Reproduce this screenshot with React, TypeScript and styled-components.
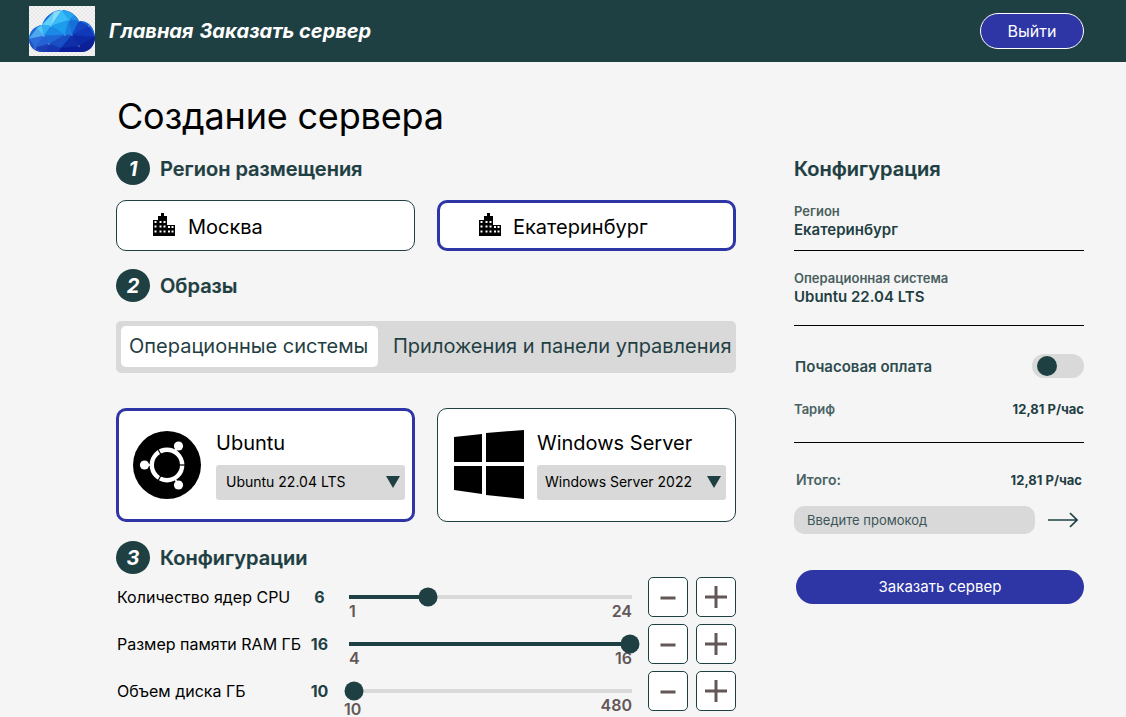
import React from "react";
import styled, { createGlobalStyle } from "styled-components";

const Global = createGlobalStyle`
  html, body { margin: 0; padding: 0; height: 717px; overflow: hidden; background: #f5f5f5; }
  body { font-family: Inter, "Liberation Sans", sans-serif; color: #000; }
  * { box-sizing: border-box; }
`;

const DARK = "#1f4043";
const BLUE = "#2e35a5";

const Header = styled.header`
  height: 62px; background: ${DARK}; display: flex; align-items: center;
  padding: 0 42px 0 29px;
`;
const LogoBox = styled.div`width: 66px; height: 50px; background: #f2f2f2; flex: none; display: flex; margin-top: -1px;`;
const Nav = styled.nav`display: flex; gap: 6px; margin-left: 14px; flex: 1; margin-top: -1px;`;
const NavLink = styled.a`
  font: italic 700 20px/24px Inter, sans-serif; color: #fff;
`;
const ExitButton = styled.button`
  width: 104px; height: 36px; border-radius: 18px; border: 1px solid #fff; background: ${BLUE};
  color: #fff; font: 400 16px/20px Inter, sans-serif; padding: 0;
`;

const Main = styled.main`
  display: grid; grid-template-columns: 620px 290px; column-gap: 58px; padding-left: 116px;
`;
const Left = styled.section`display: flex; flex-direction: column; min-width: 0;`;
const Right = styled.aside`display: flex; flex-direction: column; padding-top: 95px;`;
const Title = styled.h1`
  margin: 32px 0 0 1px; font: 400 36px/44px Inter, sans-serif; color: #000; height: 44px; letter-spacing: -0.19px;
`;
const StepRow = styled.div<{ $top: number }>`
  display: flex; align-items: center; gap: 10px; height: 33px; margin-top: ${(p) => p.$top}px;
`;
const StepBadge = styled.span`
  width: 34px; height: 33px; border-radius: 50%; background: ${DARK}; color: #fff; flex: none;
  display: flex; align-items: center; justify-content: center;
  font: italic 700 20px/24px Inter, sans-serif;
`;
const StepTitle = styled.h2`
  margin: 0; font: 600 20px/24px Inter, sans-serif; color: ${DARK}; -webkit-text-stroke: 0.2px ${DARK};
`;
const TwoCols = styled.div<{ $top: number }>`
  display: grid; grid-template-columns: 299px 299px; column-gap: 22px; margin-top: ${(p) => p.$top}px;
`;
const RegionCard = styled.div<{ $on?: boolean }>`
  height: 51px; background: #fff; border-radius: 10px;
  border: ${(p) => (p.$on ? `3px solid ${BLUE}` : `1px solid ${DARK}`)};
  display: flex; align-items: center; gap: ${(p) => (p.$on ? 12 : 13)}px;
  padding: 2px 0 0 ${(p) => (p.$on ? 39 : 36)}px;
  font: 400 20px/24px Inter, sans-serif;
  & svg { margin-top: -4px; flex: none; }
`;
const Tabs = styled.div`
  margin-top: 19px; height: 52px; background: #d9d9d9; border-radius: 5px; padding: 5px 4px 6px 5px;
  display: flex; align-items: stretch;
`;
const Tab = styled.div<{ $on?: boolean }>`
  font: 400 20px/41px Inter, sans-serif; white-space: nowrap; color: ${DARK};
  ${(p) => (p.$on ? `background:#fff; border-radius:5px; width:257px; padding-left:8px; margin-right:15px;` : "")}
`;
const OsCard = styled.div<{ $on?: boolean }>`
  height: 114px; background: #fff; border-radius: 10px;
  border: ${(p) => (p.$on ? `3px solid ${BLUE}` : `1px solid ${DARK}`)};
  display: grid; grid-template-columns: 70px 189px; column-gap: ${(p) => (p.$on ? 14 : 13)}px; align-items: center;
  padding-left: ${(p) => (p.$on ? 13 : 16)}px;
`;
const OsBody = styled.div`display: flex; flex-direction: column;`;
const OsName = styled.div`font: 400 20px/24px Inter, sans-serif; margin: 0 0 10px 0; color: #000;`;
const SelectBox = styled.div<{ $pad: number }>`
  height: 35px; background: #d9d9d9; border-radius: 3px; display: flex; align-items: center;
  justify-content: space-between; padding: 0 5px 0 ${(p) => p.$pad}px;
  font: 400 14px/18px Inter, sans-serif; color: #000; white-space: nowrap;
  & svg { flex: none; }
`;
const Configs = styled.div`display: flex; flex-direction: column; gap: 7px; margin-top: 3px;`;
const ConfigRow = styled.div`
  display: grid; grid-template-columns: 186px 47px 283px 88px; align-items: start; height: 40px;
`;
const ConfigLabel = styled.div`font: 400 16px/20px Inter, sans-serif; margin-top: 10px; padding-left: 1px; white-space: nowrap;`;
const ConfigValue = styled.div`font: 700 16px/20px Inter, sans-serif; color: ${DARK}; margin-top: 10px; text-align: center; padding-right: 12px;`;
const Slider = styled.div`display: flex; flex-direction: column; padding-top: 18px;`;
const Track = styled.div`height: 4px; background: #d9d9d9; position: relative;`;
const Fill = styled.div`position: absolute; left: 0; top: 0; bottom: 0; background: ${DARK};`;
const Thumb = styled.div`
  position: absolute; top: 50%; width: 19px; height: 19px; border-radius: 50%; background: ${DARK};
  transform: translate(-50%, -50%);
`;
const Scale = styled.div`
  display: flex; justify-content: space-between; align-items: flex-start;
  font: 600 16px/16px Inter, sans-serif; color: #635757; margin-top: 4px;
`;
const MinTick = styled.span<{ $shift: number; $drop: number }>`
  margin-left: ${(p) => p.$shift}px; margin-top: ${(p) => p.$drop}px;
`;
const Steppers = styled.div`display: flex; gap: 8px; padding-left: 16px;`;
const StepBtn = styled.button`
  width: 40px; height: 40px; padding: 0; background: #fff; border: 1px solid ${DARK}; border-radius: 5px;
  display: flex; align-items: center; justify-content: center; flex: none;
`;
const SideTitle = styled.h3`margin: 0; font: 600 20px/24px Inter, sans-serif; color: ${DARK}; -webkit-text-stroke: 0.2px ${DARK};`;
const SideBlock = styled.div<{ $h: number; $top: number }>`
  height: ${(p) => p.$h}px; margin-top: ${(p) => p.$top}px; border-bottom: 1px solid #000;
  display: flex; flex-direction: column;
`;
const SideLabel = styled.div`font: 600 13px/16px Inter, sans-serif; color: #4a5f60; margin-top: -1px;`;
const SideValue = styled.div`font: 600 15px/18px Inter, sans-serif; color: ${DARK}; margin-top: 2px;`;
const ToggleRow = styled.div`display: flex; justify-content: space-between; align-items: center; margin-top: 28px; height: 24px; padding-left: 1px;`;
const ToggleLabel = styled.div`font: 600 15px/18px Inter, sans-serif; color: #2d4c4f; padding-top: 1px;`;
const Toggle = styled.div`width: 52px; height: 24px; background: #d9d9d9; border-radius: 12px; display: flex; align-items: center; padding-left: 5px;`;
const Knob = styled.div`width: 20px; height: 20px; border-radius: 50%; background: ${DARK};`;
const PriceRow = styled.div<{ $top: number; $inset?: number }>`
  display: flex; justify-content: space-between; align-items: center; height: 16px;
  margin-top: ${(p) => p.$top}px; padding: 0 ${(p) => p.$inset ?? 0}px;
`;
const PriceLabel = styled.div<{ $size: number }>`font: 600 ${(p) => p.$size}px/16px Inter, sans-serif; color: #4a6364;`;
const PriceValue = styled.div`font: 700 13px/16px Inter, sans-serif; color: ${DARK};`;
const Rule = styled.div`height: 1px; background: #000; margin-top: 25px;`;
const PromoRow = styled.div`display: flex; align-items: center; margin-top: 18px; gap: 13px;`;
const Promo = styled.div`
  width: 241px; height: 28px; border-radius: 10px; background: #d9d9d9; padding-left: 13px;
  font: 400 13px/28px Inter, sans-serif; color: #3c5557;
`;
const OrderBtn = styled.button`
  margin: 36px 0 0 2px; height: 34px; width: 288px; border: 0; border-radius: 17px; background: ${BLUE};
  color: #fff; font: 400 15px/18px Inter, sans-serif; padding: 0;
`;

const cloud = "M14 46C5 46 0 40 0 33 0 26 5 20 13 19 16 10 24 4 33 4 41 4 47 9 50 15 59 14 66 22 66 31 66 40 60 46 52 46Z";
const facets: [string, string][] = [
  ["0,33 8,22 15,30", "#4fa8ee"],
  ["8,22 13,19 15,30", "#55c8f8"],
  ["13,19 25,6 22,20", "#5fd0fb"],
  ["25,6 33,4 22,20", "#86def9"],
  ["33,4 40,14 22,20", "#39bdf8"],
  ["33,4 47,8 40,14", "#25a6ee"],
  ["47,8 50,15 40,14", "#1e8ee4"],
  ["13,19 22,20 15,30", "#2fb0f3"],
  ["22,20 40,14 36,29", "#1e9cec"],
  ["22,20 36,29 15,30", "#1a8ae6"],
  ["40,14 50,15 43,29", "#176fd8"],
  ["40,14 43,29 36,29", "#1a7fe0"],
  ["50,15 60,20 43,29", "#1446c4"],
  ["60,20 66,31 43,29", "#1138b8"],
  ["0,33 15,30 6,42", "#2a6ddb"],
  ["15,30 20,38 6,42", "#2563d4"],
  ["15,30 36,29 20,38", "#1f67d6"],
  ["36,29 43,29 32,42", "#1550c8"],
  ["20,38 36,29 32,42", "#1a4fc4"],
  ["0,33 6,42 14,46 0,46", "#2450c0"],
  ["6,42 20,38 18,46 14,46", "#1c3db4"],
  ["20,38 32,42 30,46 18,46", "#1536ae"],
  ["32,42 43,29 50,40", "#0f2ea8"],
  ["43,29 66,31 50,40", "#0d2aa6"],
  ["32,42 50,40 52,46 30,46", "#0a1f9c"],
  ["50,40 66,31 66,46 52,46", "#0c1f94"],
];
const sparks: [number, number][] = [[15, 30], [22, 20], [33, 4], [40, 14], [43, 29], [50, 15], [60, 20], [6, 42], [20, 38], [36, 29], [50, 40]];

const CloudLogo = () => (
  <svg width="66" height="50" viewBox="0 0 66 50">
    <defs>
      <pattern id="chk" width="4" height="4" patternUnits="userSpaceOnUse">
        <rect width="4" height="4" fill="#f4f4f4" />
        <rect width="2" height="2" fill="#e9e9e9" />
        <rect x="2" y="2" width="2" height="2" fill="#e9e9e9" />
      </pattern>
      <clipPath id="cc"><path d={cloud} /></clipPath>
    </defs>
    <rect width="66" height="50" fill="url(#chk)" />
    <path d={cloud} fill="#1a6ad8" />
    <g clipPath="url(#cc)">
      {facets.map(([p, f]) => <polygon key={p} points={p} fill={f} stroke={f} strokeWidth="0.4" />)}
      {sparks.map(([x, y]) => <circle key={x + "-" + y} cx={x} cy={y} r="0.6" fill="#fff" opacity="0.85" />)}
    </g>
  </svg>
);

const CityIcon = () => (
  <svg width="22" height="23" viewBox="0 0 22 23">
    <path
      fillRule="evenodd"
      d="M0 7H5V3H8V0H11V3H14V12H22V23H0ZM1.5 8V10H3.5V8ZM6.5 8V10H8.5V8ZM10.5 8V10H12.5V8ZM1.5 12.5V14.5H3.5V12.5ZM6.5 12.5V14.5H8.5V12.5ZM10.5 12.5V14.5H12.5V12.5ZM15 13V15H17V13ZM18.5 13V15H20.5V13ZM1.5 17.5V19.5H3.5V17.5ZM6.5 17.5V19.5H8.5V17.5ZM10.5 17.5V19.5H12.5V17.5ZM15 17.5V19.5H17V17.5ZM18.5 17.5V19.5H20.5V17.5Z"
      fill="#000"
    />
  </svg>
);

const UbuntuIcon = () => (
  <svg width="70" height="70" viewBox="0 0 70 70">
    <circle cx="35" cy="35" r="34" fill="#000" />
    <circle cx="35" cy="35" r="15.2" fill="none" stroke="#fff" strokeWidth="4.4" />
    <g stroke="#000" strokeWidth="1.2">
      <line x1="45" y1="35" x2="54" y2="35" />
      <line x1="30" y1="26.3" x2="25.5" y2="18.5" />
      <line x1="30" y1="43.7" x2="25.5" y2="51.5" />
    </g>
    <g stroke="#fff" strokeWidth="1.6">
      <line x1="42.5" y1="22" x2="46" y2="16" />
      <line x1="42.5" y1="48" x2="46" y2="54" />
      <line x1="20" y1="35" x2="13" y2="35" />
    </g>
    <circle cx="46.5" cy="16" r="4.6" fill="#fff" />
    <circle cx="46.5" cy="55" r="4.6" fill="#fff" />
    <circle cx="12.5" cy="35" r="4.6" fill="#fff" />
  </svg>
);

const WindowsIcon = () => (
  <svg width="70" height="70" viewBox="0 0 70 70">
    <polygon points="0,7 28,4 28,32 0,32" fill="#000" />
    <polygon points="32,3 70,0 70,32 32,32" fill="#000" />
    <polygon points="0,36 28,36 28,64 0,60" fill="#000" />
    <polygon points="32,36 70,36 70,69 32,65" fill="#000" />
  </svg>
);

const Caret = () => (
  <svg width="14" height="12" viewBox="0 0 14 12"><polygon points="0,0 14,0 7,12" fill={DARK} /></svg>
);
const Minus = () => (
  <svg width="18" height="18" viewBox="0 0 18 18"><rect x="1.5" y="8.5" width="15" height="3" fill="#635757" /></svg>
);
const Plus = () => (
  <svg width="24" height="24" viewBox="0 0 24 24"><path d="M1 12H23M12 1V23" stroke="#635757" strokeWidth="3" /></svg>
);
const ArrowRight = () => (
  <svg width="30" height="16" viewBox="0 0 30 16" fill="none" stroke={DARK} strokeWidth="1.7">
    <path d="M0 8H29M22 1L29 8L22 15" />
  </svg>
);

const configs = [
  { label: "Количество ядер CPU", value: "6", min: "1", max: "24", pct: 28, shift: 0, drop: 0 },
  { label: "Размер памяти RAM ГБ", value: "16", min: "4", max: "16", pct: 99.3, shift: 0, drop: 0 },
  { label: "Объем диска ГБ", value: "10", min: "10", max: "480", pct: 1.8, shift: -5, drop: 4 },
];

export default function App() {
  return (
    <>
      <Global />
      <Header>
        <LogoBox><CloudLogo /></LogoBox>
        <Nav>
          <NavLink>Главная</NavLink>
          <NavLink>Заказать сервер</NavLink>
        </Nav>
        <ExitButton>Выйти</ExitButton>
      </Header>
      <Main>
        <Left>
          <Title>Создание сервера</Title>
          <StepRow $top={14}><StepBadge>1</StepBadge><StepTitle>Регион размещения</StepTitle></StepRow>
          <TwoCols $top={15}>
            <RegionCard><CityIcon />Москва</RegionCard>
            <RegionCard $on><CityIcon />Екатеринбург</RegionCard>
          </TwoCols>
          <StepRow $top={18}><StepBadge>2</StepBadge><StepTitle>Образы</StepTitle></StepRow>
          <Tabs>
            <Tab $on>Операционные системы</Tab>
            <Tab>Приложения и панели управления</Tab>
          </Tabs>
          <TwoCols $top={35}>
            <OsCard $on>
              <UbuntuIcon />
              <OsBody>
                <OsName>Ubuntu</OsName>
                <SelectBox $pad={10}>Ubuntu 22.04 LTS<Caret /></SelectBox>
              </OsBody>
            </OsCard>
            <OsCard>
              <WindowsIcon />
              <OsBody>
                <OsName>Windows Server</OsName>
                <SelectBox $pad={8}>Windows Server 2022<Caret /></SelectBox>
              </OsBody>
            </OsCard>
          </TwoCols>
          <StepRow $top={19}><StepBadge>3</StepBadge><StepTitle>Конфигурации</StepTitle></StepRow>
          <Configs>
            {configs.map((c) => (
              <ConfigRow key={c.label}>
                <ConfigLabel>{c.label}</ConfigLabel>
                <ConfigValue>{c.value}</ConfigValue>
                <Slider>
                  <Track>
                    <Fill style={{ width: `${c.pct}%` }} />
                    <Thumb style={{ left: `${c.pct}%` }} />
                  </Track>
                  <Scale>
                    <MinTick $shift={c.shift} $drop={c.drop}>{c.min}</MinTick>
                    <span>{c.max}</span>
                  </Scale>
                </Slider>
                <Steppers>
                  <StepBtn aria-label="minus"><Minus /></StepBtn>
                  <StepBtn aria-label="plus"><Plus /></StepBtn>
                </Steppers>
              </ConfigRow>
            ))}
          </Configs>
        </Left>
        <Right>
          <SideTitle>Конфигурация</SideTitle>
          <SideBlock $top={23} $h={47}>
            <SideLabel>Регион</SideLabel>
            <SideValue>Екатеринбург</SideValue>
          </SideBlock>
          <SideBlock $top={20} $h={55}>
            <SideLabel>Операционная система</SideLabel>
            <SideValue>Ubuntu 22.04 LTS</SideValue>
          </SideBlock>
          <ToggleRow>
            <ToggleLabel>Почасовая оплата</ToggleLabel>
            <Toggle><Knob /></Toggle>
          </ToggleRow>
          <PriceRow $top={23}><PriceLabel $size={13}>Тариф</PriceLabel><PriceValue>12,81 Р/час</PriceValue></PriceRow>
          <Rule />
          <PriceRow $top={29} $inset={2}><PriceLabel $size={14}>Итого:</PriceLabel><PriceValue>12,81 Р/час</PriceValue></PriceRow>
          <PromoRow>
            <Promo>Введите промокод</Promo>
            <ArrowRight />
          </PromoRow>
          <OrderBtn>Заказать сервер</OrderBtn>
        </Right>
      </Main>
    </>
  );
}
